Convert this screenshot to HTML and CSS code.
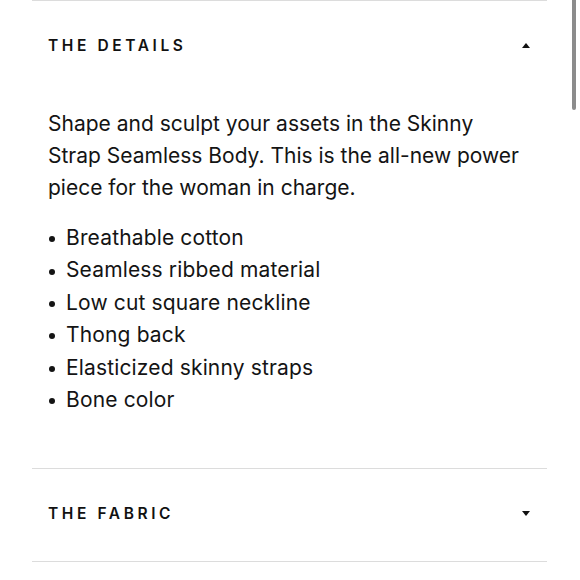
FILE: index.html
```html
<!DOCTYPE html>
<html lang="en">
<head>
<meta charset="utf-8">
<title>The Details</title>
<link rel="stylesheet" href="styles.css">
</head>
<body>
<div class="accordion">
  <section class="panel">
    <div class="panel-head">
      <span class="panel-title">THE DETAILS</span>
      <span class="caret caret-up"></span>
    </div>
    <div class="panel-body">
      <p class="intro">Shape and sculpt your assets in the Skinny Strap Seamless Body. This is the all-new power piece for the woman in charge.</p>
      <ul class="features">
        <li>Breathable cotton</li>
        <li>Seamless ribbed material</li>
        <li>Low cut square neckline</li>
        <li>Thong back</li>
        <li>Elasticized skinny straps</li>
        <li>Bone color</li>
      </ul>
    </div>
  </section>
  <section class="panel">
    <div class="panel-head">
      <span class="panel-title">THE FABRIC</span>
      <span class="caret caret-down"></span>
    </div>
  </section>
</div>
<div class="scrollbar"></div>
</body>
</html>
```

FILE: styles.css
```css
html, body {
  margin: 0;
  padding: 0;
  background: #fff;
}
body {
  font-family: Inter, "Noto Sans", sans-serif;
  color: #141414;
  width: 580px;
  height: 580px;
  overflow: hidden;
  position: relative;
}
.accordion {
  margin: 0 33px 0 32px;
  border-bottom: 1px solid #dcdcdc;
}
.panel {
  border-top: 1px solid #dcdcdc;
}
.panel-head {
  height: 92px;
  display: flex;
  align-items: center;
  justify-content: space-between;
  padding: 0 17px 3px 16px;
  box-sizing: border-box;
}
.panel-title {
  font-family: Inter, "Liberation Sans", sans-serif;
  font-weight: 600;
  font-size: 15.5px;
  letter-spacing: 3.6px;
  color: #111;
}
.caret {
  width: 0;
  height: 0;
  border-left: 4px solid transparent;
  border-right: 4px solid transparent;
}
.caret-up {
  border-bottom: 5px solid #111;
}
.caret-down {
  border-top: 5px solid #111;
}
.panel-body {
  padding: 15px 16px 52px 16px;
}
.intro {
  margin: 0;
  font-size: 21px;
  line-height: 32px;
  letter-spacing: 0;
}
.features {
  list-style: none;
  margin: 18px 0 0 0;
  padding: 0;
  font-size: 21px;
  line-height: 32.4px;
  letter-spacing: 0.15px;
}
.features li {
  display: flex;
  align-items: center;
}
.features li::before {
  content: "";
  width: 6px;
  height: 6px;
  border-radius: 50%;
  background: #141414;
  margin: 2px 11px 0 1px;
  flex: none;
}
.scrollbar {
  position: absolute;
  top: 0;
  right: 4px;
  width: 4px;
  height: 110px;
  background: #8c8c8c;
  border-radius: 0 0 2px 2px;
}
```
